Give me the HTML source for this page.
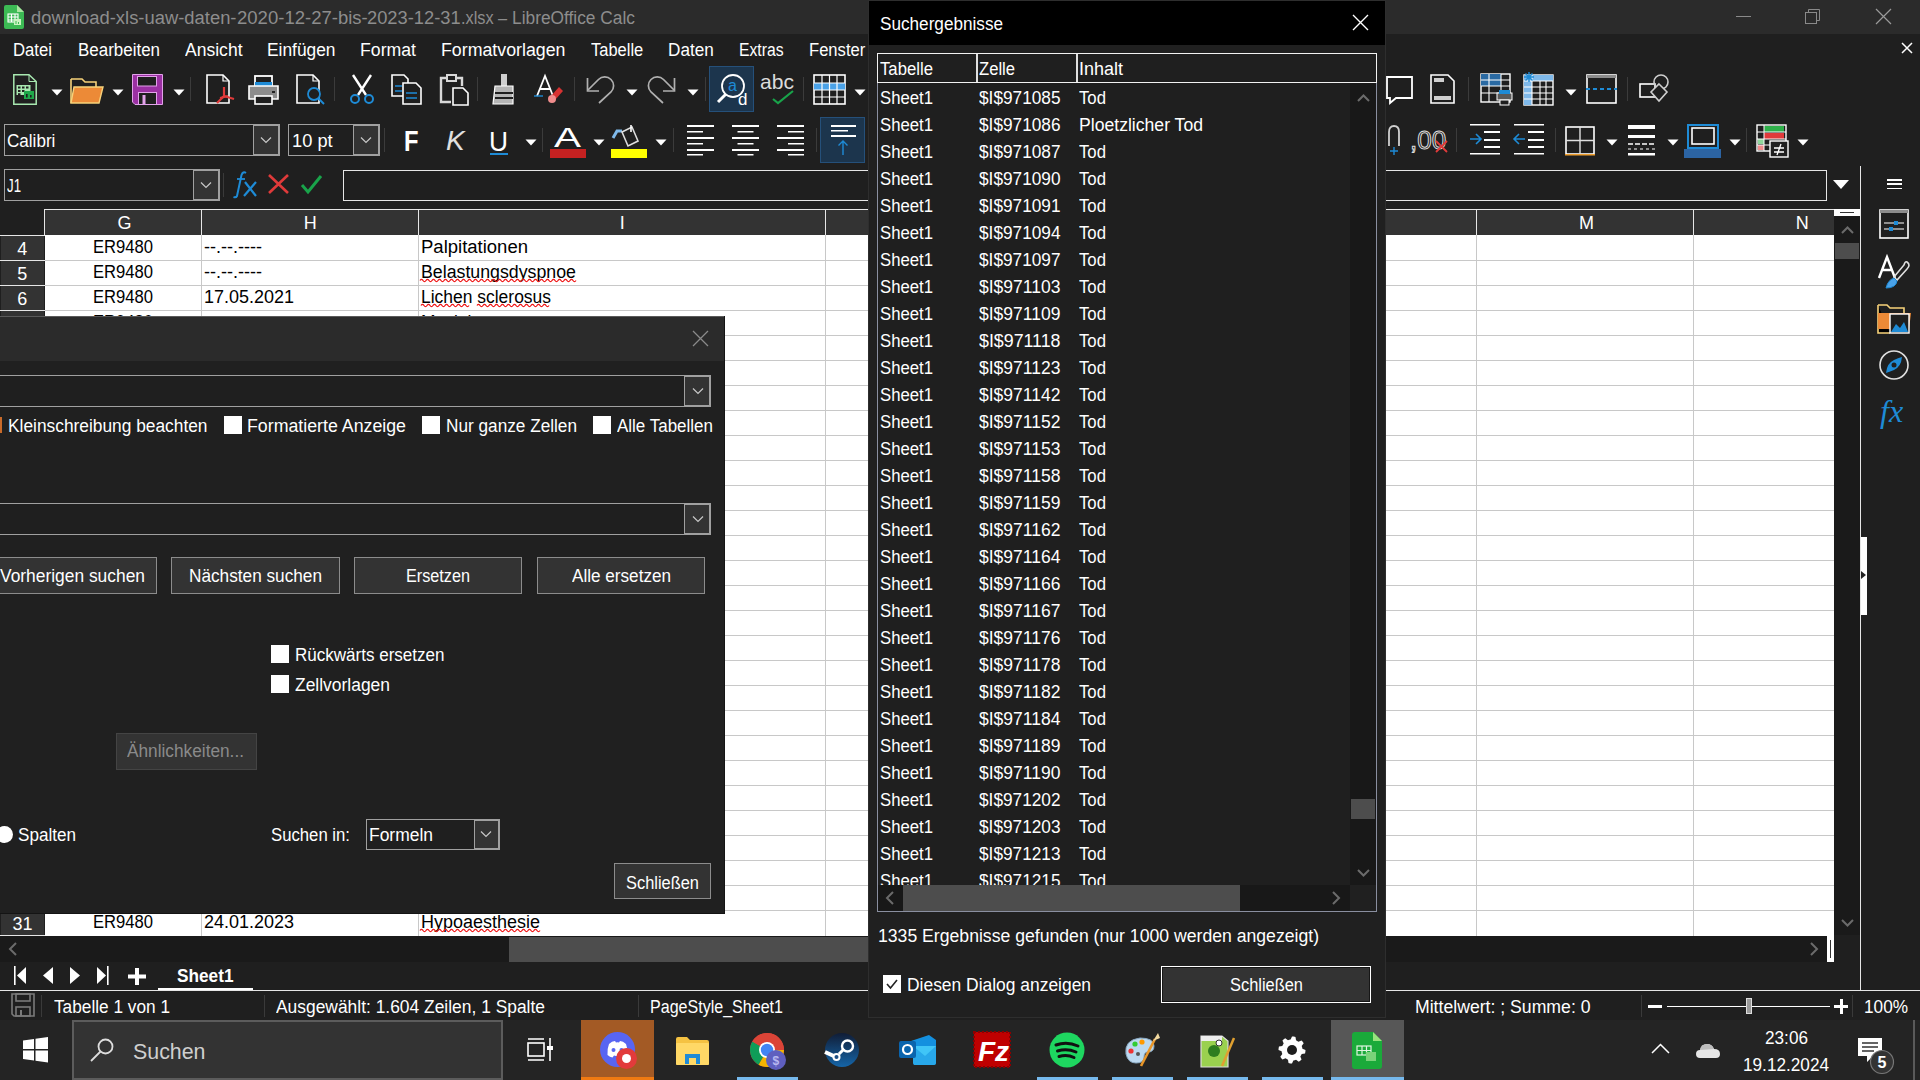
<!DOCTYPE html><html><head><meta charset="utf-8"><style>
html,body{margin:0;padding:0;width:1920px;height:1080px;overflow:hidden;background:#1f1f1f;}
.r{position:absolute;display:block;}
.t{position:absolute;white-space:nowrap;line-height:0;font-family:"Liberation Sans",sans-serif;}
svg.r{overflow:visible}
</style></head><body>
<div class="r" style="left:0px;top:0px;width:1920px;height:34px;background:#2b2b2b;"></div>
<svg class="r" style="left:4px;top:5px" width="20" height="24" viewBox="0 0 20 24"><path d="M2 0H13L20 7V22Q20 24 18 24H2Q0 24 0 22V2Q0 0 2 0Z" fill="#3cba54"/><path d="M13 0L20 7H13Z" fill="#a9e6a0"/><g fill="none" stroke="#fff" stroke-width="1.1"><rect x="4" y="9" width="10" height="8"/><path d="M4 12H14M4 15H14M7.5 9V17M11 9V17"/></g><rect x="10" y="14" width="7" height="6" fill="#c9f5c0"/><path d="M12 16V19M14.5 17V19" stroke="#3cba54"/></svg>
<div class="t" style="left:31px;top:17.75px;font-size:18px;color:#8d8d8d;transform:scaleX(1.0218);transform-origin:0 0;">download-xls-uaw-daten-</div>
<div class="t" style="left:236.5px;top:17.75px;font-size:18px;color:#8d8d8d;transform:scaleX(1.0298);transform-origin:0 0;">2020-12-27-</div>
<div class="t" style="left:337.5px;top:17.75px;font-size:18px;color:#8d8d8d;transform:scaleX(1.0240);transform-origin:0 0;">bis-</div>
<div class="t" style="left:367.2px;top:17.75px;font-size:18px;color:#8d8d8d;transform:scaleX(1.0165);transform-origin:0 0;">2023-12-31</div>
<div class="t" style="left:460.8px;top:17.75px;font-size:18px;color:#8d8d8d;transform:scaleX(0.9052);transform-origin:0 0;">.xlsx – </div>
<div class="t" style="left:511.5px;top:17.75px;font-size:18px;color:#8d8d8d;transform:scaleX(0.9630);transform-origin:0 0;">LibreOffice Calc</div>
<div class="r" style="left:1736px;top:16px;width:15px;height:1px;background:#8a8a8a;"></div>
<svg class="r" style="left:1802px;top:8px" width="20" height="18" viewBox="0 0 20 18"><rect x="3.5" y="4.5" width="11" height="11" fill="none" stroke="#8a8a8a"/><path d="M6.5 4.5V1.5H17.5V12.5H14.5" fill="none" stroke="#8a8a8a"/></svg>
<svg class="r" style="left:1874px;top:8px" width="20" height="18" viewBox="0 0 20 18"><path d="M2 1L17 16M17 1L2 16" stroke="#9a9a9a" stroke-width="1.2"/></svg>
<div class="t" style="left:13px;top:49.75px;font-size:18px;color:#ffffff;transform:scaleX(0.9281);transform-origin:0 0;">Datei</div>
<div class="t" style="left:77.5px;top:49.75px;font-size:18px;color:#ffffff;transform:scaleX(0.9418);transform-origin:0 0;">Bearbeiten</div>
<div class="t" style="left:184.5px;top:49.75px;font-size:18px;color:#ffffff;transform:scaleX(0.9741);transform-origin:0 0;">Ansicht</div>
<div class="t" style="left:266.5px;top:49.75px;font-size:18px;color:#ffffff;transform:scaleX(0.9639);transform-origin:0 0;">Einfügen</div>
<div class="t" style="left:359.5px;top:49.75px;font-size:18px;color:#ffffff;transform:scaleX(0.9823);transform-origin:0 0;">Format</div>
<div class="t" style="left:441px;top:49.75px;font-size:18px;color:#ffffff;transform:scaleX(0.9876);transform-origin:0 0;">Formatvorlagen</div>
<div class="t" style="left:590.75px;top:49.75px;font-size:18px;color:#ffffff;transform:scaleX(0.9160);transform-origin:0 0;">Tabelle</div>
<div class="t" style="left:668px;top:49.75px;font-size:18px;color:#ffffff;transform:scaleX(0.9525);transform-origin:0 0;">Daten</div>
<div class="t" style="left:738.75px;top:49.75px;font-size:18px;color:#ffffff;transform:scaleX(0.8723);transform-origin:0 0;">Extras</div>
<div class="t" style="left:808.75px;top:49.75px;font-size:18px;color:#ffffff;transform:scaleX(0.9218);transform-origin:0 0;">Fenster</div>
<svg class="r" style="left:1900px;top:41px" width="14" height="14" viewBox="0 0 14 14"><path d="M2 2L12 12M12 2L2 12" stroke="#fff" stroke-width="1.5"/></svg>
<svg class="r" style="left:13px;top:74px" width="24" height="31" viewBox="0 0 24 31"><path d="M0.8 0.8H16L23.2 7.5V30.2H0.8Z" fill="none" stroke="#a8e8b0" stroke-width="1.5"/><path d="M16 1V7.5H23" fill="none" stroke="#a8e8b0" stroke-width="1"/><rect x="3.5" y="11" width="14" height="10" fill="#a8e8b0"/><g fill="#1f1f1f"><rect x="5" y="12.5" width="2.5" height="2"/><rect x="9" y="12.5" width="2.5" height="2"/><rect x="13" y="12.5" width="2.5" height="2"/><rect x="5" y="16" width="2.5" height="2"/><rect x="9" y="16" width="2.5" height="2"/><rect x="5" y="19.2" width="2.5" height="1.8"/></g><rect x="11" y="17" width="10" height="8" fill="#1fa84a"/><rect x="13" y="20" width="1.6" height="3.5" fill="#1f1f1f"/><rect x="17" y="21" width="1.6" height="2.5" fill="#1f1f1f"/></svg>
<svg class="r" style="left:51px;top:89px" width="12" height="7" viewBox="0 0 12 7"><path d="M0.5 0.5H11.5L6 6.5Z" fill="#fff"/></svg>
<svg class="r" style="left:70px;top:75px" width="34" height="30" viewBox="0 0 34 30"><path d="M1 4H12L15 7H26V12" fill="none" stroke="#f7d27a" stroke-width="1.6"/><path d="M1 4V28" stroke="#f7d27a" stroke-width="1.6"/><path d="M4 12H33L29 28H1Z" fill="#ec8a37" stroke="#f7d27a" stroke-width="1.4"/></svg>
<svg class="r" style="left:112px;top:89px" width="12" height="7" viewBox="0 0 12 7"><path d="M0.5 0.5H11.5L6 6.5Z" fill="#fff"/></svg>
<svg class="r" style="left:132px;top:74px" width="31" height="31" viewBox="0 0 31 31"><path d="M0.5 0.5H30.5V30.5H3L0.5 28Z" fill="#9b30a3" stroke="#e2a2ea" stroke-width="1"/><rect x="5.5" y="2.5" width="19" height="9.5" fill="#1f1f1f" stroke="#e2a2ea" stroke-width="1"/><rect x="6.5" y="18.5" width="18" height="12" fill="#1f1f1f" stroke="#e2a2ea" stroke-width="1"/><rect x="10.5" y="21" width="3" height="9.5" fill="#e2a2ea"/></svg>
<svg class="r" style="left:173px;top:89px" width="12" height="7" viewBox="0 0 12 7"><path d="M0.5 0.5H11.5L6 6.5Z" fill="#fff"/></svg>
<div class="r" style="left:190px;top:77px;width:1px;height:24px;background:#3b3b3b;"></div>
<svg class="r" style="left:206px;top:74px" width="30" height="32" viewBox="0 0 30 32"><path d="M1 1H17L23 7V29H1Z" fill="none" stroke="#fff" stroke-width="1.6"/><path d="M17 1V7H23" fill="none" stroke="#fff" stroke-width="1.2"/><path d="M18 13V22L11 29M18 22L28 25" fill="none" stroke="#e03a3a" stroke-width="2.2"/><path d="M14 24L22 22" stroke="#e03a3a" stroke-width="2"/></svg>
<svg class="r" style="left:248px;top:75px" width="31" height="30" viewBox="0 0 31 30"><rect x="7" y="1" width="17" height="9" fill="none" stroke="#fff" stroke-width="1.8"/><rect x="7" y="7" width="17" height="4" fill="#1e8bd6"/><path d="M1 11H30V24H1Z" fill="#8c8c8c" stroke="#fff" stroke-width="1.6"/><rect x="7" y="21" width="17" height="8" fill="#1f1f1f" stroke="#fff" stroke-width="1.6"/><rect x="24" y="16" width="3" height="2" fill="#222"/></svg>
<svg class="r" style="left:296px;top:74px" width="30" height="32" viewBox="0 0 30 32"><path d="M1 1H17L23 7V29H1Z" fill="none" stroke="#fff" stroke-width="1.6"/><path d="M17 1V7H23" fill="none" stroke="#fff" stroke-width="1.2"/><circle cx="18" cy="20" r="6" fill="#1f1f1f" stroke="#1e8bd6" stroke-width="1.8"/><path d="M22 24L28 30" stroke="#1e8bd6" stroke-width="2"/></svg>
<div class="r" style="left:334px;top:77px;width:1px;height:24px;background:#3b3b3b;"></div>
<svg class="r" style="left:348px;top:74px" width="28" height="30" viewBox="0 0 28 30"><path d="M5 1L18 21M23 1L10 21" stroke="#fff" stroke-width="2.4"/><circle cx="7" cy="25" r="4" fill="none" stroke="#1e8bd6" stroke-width="2"/><circle cx="21" cy="25" r="4" fill="none" stroke="#1e8bd6" stroke-width="2"/></svg>
<svg class="r" style="left:391px;top:74px" width="31" height="31" viewBox="0 0 31 31"><path d="M1 1H13L17 5V22H1Z" fill="none" stroke="#fff" stroke-width="1.6"/><path d="M12 9H25L30 14V30H12Z" fill="#1f1f1f" stroke="#fff" stroke-width="1.6"/><path d="M4 12H11M4 17H11M15 19H26M15 24H26" stroke="#1e8bd6" stroke-width="1.6"/></svg>
<svg class="r" style="left:439px;top:74px" width="31" height="32" viewBox="0 0 31 32"><path d="M7 4H2V28H12M18 4H23V12" fill="none" stroke="#d8d8d8" stroke-width="2.4"/><rect x="8" y="1" width="9" height="6" fill="none" stroke="#d8d8d8" stroke-width="2"/><path d="M14 14H24L29 19V31H14Z" fill="#1f1f1f" stroke="#fff" stroke-width="1.6"/></svg>
<div class="r" style="left:477px;top:77px;width:1px;height:24px;background:#3b3b3b;"></div>
<svg class="r" style="left:492px;top:73px" width="24" height="32" viewBox="0 0 24 32"><rect x="9" y="1" width="6" height="12" fill="#cfcfcf"/><path d="M3 13H21V31H1Z" fill="#b5b5b5" stroke="#fff" stroke-width="1.2"/><path d="M3 20H21M3 25H21" stroke="#1f1f1f" stroke-width="2"/></svg>
<svg class="r" style="left:534px;top:74px" width="30" height="32" viewBox="0 0 30 32"><path d="M3 22L11 2L19 22M6 15H16" fill="none" stroke="#fff" stroke-width="1.8"/><path d="M0 22H9" stroke="#1e8bd6" stroke-width="1.4"/><path d="M17 22L25 13L29 17L21 26Z" fill="#d63232"/><circle cx="18" cy="25" r="4" fill="#f08c8c"/></svg>
<div class="r" style="left:574px;top:77px;width:1px;height:24px;background:#3b3b3b;"></div>
<svg class="r" style="left:586px;top:74px" width="29" height="30" viewBox="0 0 29 30"><path d="M1.5 4V17H13" fill="none" stroke="#b0b0b0" stroke-width="1.7"/><path d="M2 16L12.5 5.5A8.6 8.6 0 0 1 25 18L13 29" fill="none" stroke="#b0b0b0" stroke-width="1.7"/></svg>
<svg class="r" style="left:626px;top:89px" width="12" height="7" viewBox="0 0 12 7"><path d="M0.5 0.5H11.5L6 6.5Z" fill="#fff"/></svg>
<svg class="r" style="left:647px;top:74px" width="29" height="30" viewBox="0 0 29 30"><path d="M27.5 4V17H16" fill="none" stroke="#b0b0b0" stroke-width="1.7"/><path d="M27 16L16.5 5.5A8.6 8.6 0 0 0 4 18L16 29" fill="none" stroke="#b0b0b0" stroke-width="1.7"/></svg>
<svg class="r" style="left:687px;top:89px" width="12" height="7" viewBox="0 0 12 7"><path d="M0.5 0.5H11.5L6 6.5Z" fill="#fff"/></svg>
<div class="r" style="left:705px;top:77px;width:1px;height:24px;background:#3b3b3b;"></div>
<div class="r" style="left:709px;top:66px;width:45px;height:46px;background:#1c354d;box-sizing:border-box;border:1px solid #25507a;"></div>
<svg class="r" style="left:716px;top:72px" width="32" height="36" viewBox="0 0 32 36"><circle cx="17" cy="14" r="11" fill="none" stroke="#fff" stroke-width="1.8"/><path d="M10 22L2 30" stroke="#fff" stroke-width="3"/><text x="12" y="19" font-family="Liberation Sans" font-size="16" fill="#1e8bd6">a</text><text x="22" y="33" font-family="Liberation Sans" font-size="17" fill="#fff">d</text></svg>
<svg class="r" style="left:760px;top:72px" width="36" height="34" viewBox="0 0 36 34"><text x="0" y="17" font-family="Liberation Sans" font-size="21" fill="#dcdcdc" textLength="34" lengthAdjust="spacingAndGlyphs">abc</text><path d="M13 27L18 31L33 19" fill="none" stroke="#19a34a" stroke-width="2.2"/></svg>
<div class="r" style="left:803px;top:77px;width:1px;height:24px;background:#3b3b3b;"></div>
<svg class="r" style="left:813px;top:74px" width="33" height="31" viewBox="0 0 33 31"><rect x="1" y="1" width="31" height="29" fill="none" stroke="#fff" stroke-width="1.6"/><rect x="1" y="9" width="31" height="7" fill="#4aa2e8"/><path d="M1 9H32M1 16H32M1 23H32M9 1V30M16.5 1V30M24 1V30" stroke="#fff" stroke-width="1.2"/></svg>
<svg class="r" style="left:854px;top:89px" width="12" height="7" viewBox="0 0 12 7"><path d="M0.5 0.5H11.5L6 6.5Z" fill="#fff"/></svg>
<svg class="r" style="left:1386px;top:74px" width="27" height="28" viewBox="0 0 27 28"><path d="M1 3H26V24H10L4 29V24H1Z" fill="none" stroke="#fff" stroke-width="1.8"/></svg>
<svg class="r" style="left:1430px;top:74px" width="25" height="30" viewBox="0 0 25 30"><path d="M1 1H18L24 7V29H1Z" fill="none" stroke="#fff" stroke-width="1.6"/><rect x="4" y="4" width="10" height="4" fill="#cfcfcf"/><rect x="4" y="22" width="17" height="4" fill="#cfcfcf"/></svg>
<div class="r" style="left:1468px;top:77px;width:1px;height:24px;background:#3b3b3b;"></div>
<svg class="r" style="left:1480px;top:73px" width="33" height="33" viewBox="0 0 33 33"><rect x="1" y="1" width="29" height="28" fill="none" stroke="#fff" stroke-width="1.4"/><rect x="1" y="1" width="20" height="12" fill="#2a6aa3"/><path d="M1 7H30M1 13H30M1 20H30M9 1V29M21 1V29" stroke="#fff" stroke-width="1.1"/><rect x="17" y="20" width="15" height="7" fill="#5a5a5a" stroke="#fff"/><rect x="19" y="17" width="11" height="4" fill="#1e8bd6"/><rect x="20" y="27" width="9" height="5" fill="#1f1f1f" stroke="#fff"/></svg>
<svg class="r" style="left:1523px;top:72px" width="31" height="34" viewBox="0 0 31 34"><rect x="1" y="3" width="29" height="30" fill="none" stroke="#fff" stroke-width="1.4"/><rect x="1" y="3" width="29" height="6" fill="#7fb9ea"/><rect x="1" y="3" width="8" height="30" fill="#7fb9ea"/><path d="M1 9H30M1 15H30M1 21H30M1 27H30M9 3V33M17 9V33M23 9V33" stroke="#fff" stroke-width="1.1"/><path d="M6 0V10M1 5H11M2.5 1.5L9.5 8.5M9.5 1.5L2.5 8.5" stroke="#1e8bd6" stroke-width="1.4"/></svg>
<svg class="r" style="left:1565px;top:89px" width="12" height="7" viewBox="0 0 12 7"><path d="M0.5 0.5H11.5L6 6.5Z" fill="#fff"/></svg>
<svg class="r" style="left:1586px;top:74px" width="31" height="30" viewBox="0 0 31 30"><rect x="1" y="1" width="29" height="28" fill="none" stroke="#fff" stroke-width="1.6"/><rect x="1" y="1" width="29" height="3" fill="#8c8c8c"/><path d="M0 15H31" stroke="#1e8bd6" stroke-width="2" stroke-dasharray="4 3"/></svg>
<div class="r" style="left:1627px;top:77px;width:1px;height:24px;background:#3b3b3b;"></div>
<svg class="r" style="left:1639px;top:74px" width="31" height="31" viewBox="0 0 31 31"><rect x="1" y="10" width="15" height="13" fill="none" stroke="#fff" stroke-width="1.6"/><circle cx="22" cy="8" r="7" fill="none" stroke="#cfcfcf" stroke-width="1.6"/><path d="M20 10L28 18L20 27L12 18Z" fill="#1f1f1f" stroke="#cfcfcf" stroke-width="1.6"/></svg>
<div class="r" style="left:4px;top:124px;width:276px;height:32px;background:#1f1f1f;box-sizing:border-box;border:1px solid #a0a0a0;"></div>
<div class="r" style="left:253px;top:125px;width:26px;height:30px;background:#333333;box-sizing:border-box;border:1px solid #a0a0a0;"></div>
<svg class="r" style="left:260px;top:136px" width="12" height="8" viewBox="0 0 12 8"><path d="M1 1.5L6 6.5L11 1.5" fill="none" stroke="#c8c8c8" stroke-width="1.2"/></svg>
<div class="t" style="left:7.3px;top:140.75px;font-size:18px;color:#fff;transform:scaleX(0.9487);transform-origin:0 0;">Calibri</div>
<div class="r" style="left:288px;top:124px;width:92px;height:32px;background:#1f1f1f;box-sizing:border-box;border:1px solid #a0a0a0;"></div>
<div class="r" style="left:353px;top:125px;width:26px;height:30px;background:#333333;box-sizing:border-box;border:1px solid #a0a0a0;"></div>
<svg class="r" style="left:360px;top:136px" width="12" height="8" viewBox="0 0 12 8"><path d="M1 1.5L6 6.5L11 1.5" fill="none" stroke="#c8c8c8" stroke-width="1.2"/></svg>
<div class="t" style="left:292.4px;top:140.75px;font-size:18px;color:#fff;transform:scaleX(1.0141);transform-origin:0 0;">10 pt</div>
<div class="r" style="left:384px;top:128px;width:1px;height:24px;background:#3b3b3b;"></div>
<div class="t" style="left:404px;top:140.59px;font-size:30px;color:#fff;font-weight:bold;transform:scaleX(0.7912);transform-origin:0 0;">F</div>
<div class="t" style="left:446px;top:141.28px;font-size:28px;color:#e0e0e0;font-style:italic;">K</div>
<div class="t" style="left:489px;top:142.28px;font-size:28px;color:#fff;transform:scaleX(0.9396);transform-origin:0 0;">U</div>
<div class="r" style="left:490px;top:153px;width:18px;height:2px;background:#1e8bd6;"></div>
<svg class="r" style="left:525px;top:139px" width="12" height="7" viewBox="0 0 12 7"><path d="M0.5 0.5H11.5L6 6.5Z" fill="#fff"/></svg>
<div class="r" style="left:542px;top:128px;width:1px;height:24px;background:#3b3b3b;"></div>
<div class="t" style="left:554px;top:138.28px;font-size:28px;color:#fff;transform:scaleX(1.4456);transform-origin:0 0;">A</div>
<div class="r" style="left:550px;top:149px;width:36px;height:9px;background:#c42121;"></div>
<svg class="r" style="left:593px;top:139px" width="12" height="7" viewBox="0 0 12 7"><path d="M0.5 0.5H11.5L6 6.5Z" fill="#fff"/></svg>
<svg class="r" style="left:611px;top:124px" width="36" height="26" viewBox="0 0 36 26"><path d="M2 14L6 7H11" fill="none" stroke="#7fb9ea" stroke-width="3"/><path d="M11 8L21 3L27 17L17 22Z" fill="none" stroke="#ddd" stroke-width="1.6"/><path d="M20 1V8" stroke="#fff" stroke-width="1.6"/></svg>
<div class="r" style="left:611px;top:149px;width:36px;height:9px;background:#ffff00;"></div>
<svg class="r" style="left:655px;top:139px" width="12" height="7" viewBox="0 0 12 7"><path d="M0.5 0.5H11.5L6 6.5Z" fill="#fff"/></svg>
<div class="r" style="left:673px;top:128px;width:1px;height:24px;background:#3b3b3b;"></div>
<svg class="r" style="left:687px;top:125px" width="28" height="31" viewBox="0 0 28 31"><rect x="0" y="0" width="27" height="2" fill="#fff"/><rect x="0" y="6" width="16" height="1.5" fill="#fff"/><rect x="0" y="12" width="27" height="2" fill="#fff"/><rect x="0" y="18" width="16" height="1.5" fill="#fff"/><rect x="0" y="24" width="27" height="2" fill="#fff"/><rect x="0" y="29" width="16" height="1.5" fill="#fff"/></svg>
<svg class="r" style="left:732px;top:125px" width="28" height="31" viewBox="0 0 28 31"><rect x="0.0" y="0" width="27" height="2" fill="#fff"/><rect x="5.5" y="6" width="16" height="1.5" fill="#fff"/><rect x="0.0" y="12" width="27" height="2" fill="#fff"/><rect x="5.5" y="18" width="16" height="1.5" fill="#fff"/><rect x="0.0" y="24" width="27" height="2" fill="#fff"/><rect x="5.5" y="29" width="16" height="1.5" fill="#fff"/></svg>
<svg class="r" style="left:777px;top:125px" width="28" height="31" viewBox="0 0 28 31"><rect x="0" y="0" width="27" height="2" fill="#fff"/><rect x="11" y="6" width="16" height="1.5" fill="#fff"/><rect x="0" y="12" width="27" height="2" fill="#fff"/><rect x="11" y="18" width="16" height="1.5" fill="#fff"/><rect x="0" y="24" width="27" height="2" fill="#fff"/><rect x="11" y="29" width="16" height="1.5" fill="#fff"/></svg>
<div class="r" style="left:816px;top:128px;width:1px;height:24px;background:#3b3b3b;"></div>
<div class="r" style="left:820px;top:117px;width:45px;height:46px;background:#1c354d;box-sizing:border-box;border:1px solid #25507a;"></div>
<svg class="r" style="left:830px;top:124px" width="27" height="32" viewBox="0 0 27 32"><rect x="1" y="1" width="25" height="2" fill="#fff"/><rect x="1" y="6" width="17" height="1.5" fill="#fff"/><rect x="1" y="11" width="25" height="2" fill="#fff"/><path d="M13 17V31M8.5 21.5L13 17L17.5 21.5" fill="none" stroke="#1e8bd6" stroke-width="1.4"/></svg>
<svg class="r" style="left:1386px;top:124px" width="64" height="34" viewBox="0 0 64 34"><path d="M3 22V8Q3 2 8 2Q13 2 13 8V22" fill="none" stroke="#cfcfcf" stroke-width="1.8"/><path d="M8 23V31M4 27H12" stroke="#1e8bd6" stroke-width="1.4"/><text x="24" y="25" font-family="Liberation Sans" font-size="26" fill="none" stroke="#ddd" stroke-width="1">,00</text><path d="M50 17L61 28M61 17L50 28" stroke="#e03a3a" stroke-width="1.8"/></svg>
<div class="r" style="left:1456px;top:128px;width:1px;height:24px;background:#3b3b3b;"></div>
<svg class="r" style="left:1470px;top:124px" width="31" height="31" viewBox="0 0 31 31"><rect x="0" y="0" width="30" height="1.5" fill="#fff"/><rect x="0" y="29" width="30" height="1.5" fill="#fff"/><rect x="14" y="7" width="16" height="2" fill="#fff"/><rect x="14" y="15" width="16" height="2" fill="#fff"/><rect x="14" y="22" width="16" height="2" fill="#fff"/><path d="M0 15H11M6 10L11 15L6 20" fill="none" stroke="#1e8bd6" stroke-width="1.6"/></svg>
<svg class="r" style="left:1514px;top:124px" width="31" height="31" viewBox="0 0 31 31"><rect x="0" y="0" width="30" height="1.5" fill="#fff"/><rect x="0" y="29" width="30" height="1.5" fill="#fff"/><rect x="14" y="7" width="16" height="2" fill="#fff"/><rect x="14" y="15" width="16" height="2" fill="#fff"/><rect x="14" y="22" width="16" height="2" fill="#fff"/><path d="M11 15H0M5 10L0 15L5 20" fill="none" stroke="#1e8bd6" stroke-width="1.6"/></svg>
<div class="r" style="left:1555px;top:128px;width:1px;height:24px;background:#3b3b3b;"></div>
<svg class="r" style="left:1565px;top:126px" width="30" height="30" viewBox="0 0 30 30"><rect x="1" y="1" width="28" height="27" fill="none" stroke="#fff" stroke-width="1.6"/><path d="M15 1V28M1 14.5H29" stroke="#e0e0e0" stroke-width="1.4"/><rect x="0" y="28" width="30" height="1.5" fill="#f0a030"/></svg>
<svg class="r" style="left:1606px;top:139px" width="12" height="7" viewBox="0 0 12 7"><path d="M0.5 0.5H11.5L6 6.5Z" fill="#fff"/></svg>
<svg class="r" style="left:1628px;top:125px" width="28" height="31" viewBox="0 0 28 31"><rect x="0" y="0" width="27" height="4" fill="#fff"/><rect x="0" y="10" width="27" height="3" fill="#fff"/><path d="M0 19H27" stroke="#fff" stroke-width="1.4" stroke-dasharray="5 2"/><path d="M0 24H27" stroke="#fff" stroke-width="1.2" stroke-dasharray="3 3"/><rect x="0" y="28" width="27" height="2.5" fill="#fff"/></svg>
<svg class="r" style="left:1667px;top:139px" width="12" height="7" viewBox="0 0 12 7"><path d="M0.5 0.5H11.5L6 6.5Z" fill="#fff"/></svg>
<svg class="r" style="left:1684px;top:124px" width="38" height="34" viewBox="0 0 38 34"><rect x="4" y="1" width="30" height="23" fill="none" stroke="#1e8bd6" stroke-width="2"/><rect x="8" y="4" width="22" height="16" fill="none" stroke="#fff" stroke-width="1.6"/><rect x="0" y="25" width="37" height="9" fill="#2c64a3"/></svg>
<svg class="r" style="left:1729px;top:139px" width="12" height="7" viewBox="0 0 12 7"><path d="M0.5 0.5H11.5L6 6.5Z" fill="#fff"/></svg>
<div class="r" style="left:1746px;top:128px;width:1px;height:24px;background:#3b3b3b;"></div>
<svg class="r" style="left:1756px;top:124px" width="33" height="34" viewBox="0 0 33 34"><rect x="1" y="1" width="29" height="26" fill="none" stroke="#fff" stroke-width="1.4"/><rect x="8" y="2" width="20" height="6" fill="#2fb04a"/><rect x="8" y="9" width="20" height="6" fill="#e03a3a"/><rect x="2" y="15" width="6" height="5" fill="#8fd69a"/><rect x="2" y="21" width="6" height="5" fill="#f08c8c"/><path d="M1 8H30M1 15H30M1 21H30M8 1V27" stroke="#fff" stroke-width="1"/><rect x="14" y="17" width="18" height="16" fill="#1f1f1f" stroke="#fff" stroke-width="1.4"/><path d="M18 24H28M18 28H28M25 20L21 31" stroke="#fff" stroke-width="1.3"/></svg>
<svg class="r" style="left:1797px;top:139px" width="12" height="7" viewBox="0 0 12 7"><path d="M0.5 0.5H11.5L6 6.5Z" fill="#fff"/></svg>
<div class="r" style="left:4px;top:169px;width:216px;height:32px;background:#1f1f1f;box-sizing:border-box;border:1px solid #a0a0a0;"></div>
<div class="r" style="left:193px;top:170px;width:26px;height:30px;background:#333333;box-sizing:border-box;border:1px solid #a0a0a0;"></div>
<svg class="r" style="left:200px;top:181px" width="12" height="8" viewBox="0 0 12 8"><path d="M1 1.5L6 6.5L11 1.5" fill="none" stroke="#c8c8c8" stroke-width="1.2"/></svg>
<div class="t" style="left:7px;top:185.75px;font-size:18px;color:#fff;transform:scaleX(0.7364);transform-origin:0 0;">J1</div>
<div class="r" style="left:223px;top:173px;width:1px;height:24px;background:#3a3a3a;"></div>
<svg class="r" style="left:232px;top:170px" width="28" height="30" viewBox="0 0 28 30"><path d="M14 3Q11 1 9.5 5L5 26Q4 28 1.5 27" fill="none" stroke="#1e8bd6" stroke-width="2"/><path d="M5 9H13" stroke="#1e8bd6" stroke-width="1.8"/><path d="M13 12L24 26M24 12L12 26" stroke="#1e8bd6" stroke-width="2.2"/></svg>
<svg class="r" style="left:267px;top:173px" width="23" height="22" viewBox="0 0 23 22"><path d="M2 2L21 20M21 2L2 20" stroke="#e03a3a" stroke-width="2.6"/></svg>
<svg class="r" style="left:300px;top:173px" width="23" height="21" viewBox="0 0 23 21"><path d="M2 12L8 19L21 3" fill="none" stroke="#19a34a" stroke-width="3"/></svg>
<div class="r" style="left:343px;top:170px;width:1484px;height:31px;background:#1f1f1f;box-sizing:border-box;border:1px solid #e6e6e6;"></div>
<svg class="r" style="left:1833px;top:180px" width="17" height="10" viewBox="0 0 17 10"><path d="M0 0H16L8 9Z" fill="#fff"/></svg>
<div class="r" style="left:1860px;top:166px;width:1px;height:824px;background:#e6e6e6;"></div>
<div class="r" style="left:44px;top:209px;width:1790px;height:1px;background:#e6e6e6;"></div>
<div class="r" style="left:45px;top:210px;width:1789px;height:25px;background:#333333;"></div>
<div class="r" style="left:44px;top:210px;width:1px;height:25px;background:#e6e6e6;"></div>
<div class="r" style="left:0px;top:235px;width:45px;height:1px;background:#e6e6e6;"></div>
<div class="r" style="left:45px;top:235px;width:1789px;height:701px;background:#ffffff;"></div>
<div class="r" style="left:45px;top:260px;width:1789px;height:1px;background:#c8c8c8;"></div>
<div class="r" style="left:45px;top:285px;width:1789px;height:1px;background:#c8c8c8;"></div>
<div class="r" style="left:45px;top:310px;width:1789px;height:1px;background:#c8c8c8;"></div>
<div class="r" style="left:45px;top:335px;width:1789px;height:1px;background:#c8c8c8;"></div>
<div class="r" style="left:45px;top:360px;width:1789px;height:1px;background:#c8c8c8;"></div>
<div class="r" style="left:45px;top:385px;width:1789px;height:1px;background:#c8c8c8;"></div>
<div class="r" style="left:45px;top:410px;width:1789px;height:1px;background:#c8c8c8;"></div>
<div class="r" style="left:45px;top:435px;width:1789px;height:1px;background:#c8c8c8;"></div>
<div class="r" style="left:45px;top:460px;width:1789px;height:1px;background:#c8c8c8;"></div>
<div class="r" style="left:45px;top:485px;width:1789px;height:1px;background:#c8c8c8;"></div>
<div class="r" style="left:45px;top:510px;width:1789px;height:1px;background:#c8c8c8;"></div>
<div class="r" style="left:45px;top:535px;width:1789px;height:1px;background:#c8c8c8;"></div>
<div class="r" style="left:45px;top:560px;width:1789px;height:1px;background:#c8c8c8;"></div>
<div class="r" style="left:45px;top:585px;width:1789px;height:1px;background:#c8c8c8;"></div>
<div class="r" style="left:45px;top:610px;width:1789px;height:1px;background:#c8c8c8;"></div>
<div class="r" style="left:45px;top:635px;width:1789px;height:1px;background:#c8c8c8;"></div>
<div class="r" style="left:45px;top:660px;width:1789px;height:1px;background:#c8c8c8;"></div>
<div class="r" style="left:45px;top:685px;width:1789px;height:1px;background:#c8c8c8;"></div>
<div class="r" style="left:45px;top:710px;width:1789px;height:1px;background:#c8c8c8;"></div>
<div class="r" style="left:45px;top:735px;width:1789px;height:1px;background:#c8c8c8;"></div>
<div class="r" style="left:45px;top:760px;width:1789px;height:1px;background:#c8c8c8;"></div>
<div class="r" style="left:45px;top:785px;width:1789px;height:1px;background:#c8c8c8;"></div>
<div class="r" style="left:45px;top:810px;width:1789px;height:1px;background:#c8c8c8;"></div>
<div class="r" style="left:45px;top:835px;width:1789px;height:1px;background:#c8c8c8;"></div>
<div class="r" style="left:45px;top:860px;width:1789px;height:1px;background:#c8c8c8;"></div>
<div class="r" style="left:45px;top:885px;width:1789px;height:1px;background:#c8c8c8;"></div>
<div class="r" style="left:45px;top:910px;width:1789px;height:1px;background:#c8c8c8;"></div>
<div class="r" style="left:201px;top:210px;width:1px;height:25px;background:#e6e6e6;"></div>
<div class="r" style="left:201px;top:235px;width:1px;height:701px;background:#c8c8c8;"></div>
<div class="r" style="left:418px;top:210px;width:1px;height:25px;background:#e6e6e6;"></div>
<div class="r" style="left:418px;top:235px;width:1px;height:701px;background:#c8c8c8;"></div>
<div class="r" style="left:825px;top:210px;width:1px;height:25px;background:#e6e6e6;"></div>
<div class="r" style="left:825px;top:235px;width:1px;height:701px;background:#c8c8c8;"></div>
<div class="r" style="left:1476px;top:210px;width:1px;height:25px;background:#e6e6e6;"></div>
<div class="r" style="left:1476px;top:235px;width:1px;height:701px;background:#c8c8c8;"></div>
<div class="r" style="left:1693px;top:210px;width:1px;height:25px;background:#e6e6e6;"></div>
<div class="r" style="left:1693px;top:235px;width:1px;height:701px;background:#c8c8c8;"></div>
<div class="r" style="left:1px;top:236px;width:43px;height:24px;background:#333333;"></div>
<div class="r" style="left:0px;top:260px;width:45px;height:1px;background:#e6e6e6;"></div>
<div class="r" style="left:1px;top:261px;width:43px;height:24px;background:#333333;"></div>
<div class="r" style="left:0px;top:285px;width:45px;height:1px;background:#e6e6e6;"></div>
<div class="r" style="left:1px;top:286px;width:43px;height:24px;background:#333333;"></div>
<div class="r" style="left:0px;top:310px;width:45px;height:1px;background:#e6e6e6;"></div>
<div class="r" style="left:1px;top:311px;width:43px;height:24px;background:#333333;"></div>
<div class="r" style="left:0px;top:335px;width:45px;height:1px;background:#e6e6e6;"></div>
<div class="r" style="left:1px;top:336px;width:43px;height:24px;background:#333333;"></div>
<div class="r" style="left:0px;top:360px;width:45px;height:1px;background:#e6e6e6;"></div>
<div class="r" style="left:1px;top:361px;width:43px;height:24px;background:#333333;"></div>
<div class="r" style="left:0px;top:385px;width:45px;height:1px;background:#e6e6e6;"></div>
<div class="r" style="left:1px;top:386px;width:43px;height:24px;background:#333333;"></div>
<div class="r" style="left:0px;top:410px;width:45px;height:1px;background:#e6e6e6;"></div>
<div class="r" style="left:1px;top:411px;width:43px;height:24px;background:#333333;"></div>
<div class="r" style="left:0px;top:435px;width:45px;height:1px;background:#e6e6e6;"></div>
<div class="r" style="left:1px;top:436px;width:43px;height:24px;background:#333333;"></div>
<div class="r" style="left:0px;top:460px;width:45px;height:1px;background:#e6e6e6;"></div>
<div class="r" style="left:1px;top:461px;width:43px;height:24px;background:#333333;"></div>
<div class="r" style="left:0px;top:485px;width:45px;height:1px;background:#e6e6e6;"></div>
<div class="r" style="left:1px;top:486px;width:43px;height:24px;background:#333333;"></div>
<div class="r" style="left:0px;top:510px;width:45px;height:1px;background:#e6e6e6;"></div>
<div class="r" style="left:1px;top:511px;width:43px;height:24px;background:#333333;"></div>
<div class="r" style="left:0px;top:535px;width:45px;height:1px;background:#e6e6e6;"></div>
<div class="r" style="left:1px;top:536px;width:43px;height:24px;background:#333333;"></div>
<div class="r" style="left:0px;top:560px;width:45px;height:1px;background:#e6e6e6;"></div>
<div class="r" style="left:1px;top:561px;width:43px;height:24px;background:#333333;"></div>
<div class="r" style="left:0px;top:585px;width:45px;height:1px;background:#e6e6e6;"></div>
<div class="r" style="left:1px;top:586px;width:43px;height:24px;background:#333333;"></div>
<div class="r" style="left:0px;top:610px;width:45px;height:1px;background:#e6e6e6;"></div>
<div class="r" style="left:1px;top:611px;width:43px;height:24px;background:#333333;"></div>
<div class="r" style="left:0px;top:635px;width:45px;height:1px;background:#e6e6e6;"></div>
<div class="r" style="left:1px;top:636px;width:43px;height:24px;background:#333333;"></div>
<div class="r" style="left:0px;top:660px;width:45px;height:1px;background:#e6e6e6;"></div>
<div class="r" style="left:1px;top:661px;width:43px;height:24px;background:#333333;"></div>
<div class="r" style="left:0px;top:685px;width:45px;height:1px;background:#e6e6e6;"></div>
<div class="r" style="left:1px;top:686px;width:43px;height:24px;background:#333333;"></div>
<div class="r" style="left:0px;top:710px;width:45px;height:1px;background:#e6e6e6;"></div>
<div class="r" style="left:1px;top:711px;width:43px;height:24px;background:#333333;"></div>
<div class="r" style="left:0px;top:735px;width:45px;height:1px;background:#e6e6e6;"></div>
<div class="r" style="left:1px;top:736px;width:43px;height:24px;background:#333333;"></div>
<div class="r" style="left:0px;top:760px;width:45px;height:1px;background:#e6e6e6;"></div>
<div class="r" style="left:1px;top:761px;width:43px;height:24px;background:#333333;"></div>
<div class="r" style="left:0px;top:785px;width:45px;height:1px;background:#e6e6e6;"></div>
<div class="r" style="left:1px;top:786px;width:43px;height:24px;background:#333333;"></div>
<div class="r" style="left:0px;top:810px;width:45px;height:1px;background:#e6e6e6;"></div>
<div class="r" style="left:1px;top:811px;width:43px;height:24px;background:#333333;"></div>
<div class="r" style="left:0px;top:835px;width:45px;height:1px;background:#e6e6e6;"></div>
<div class="r" style="left:1px;top:836px;width:43px;height:24px;background:#333333;"></div>
<div class="r" style="left:0px;top:860px;width:45px;height:1px;background:#e6e6e6;"></div>
<div class="r" style="left:1px;top:861px;width:43px;height:24px;background:#333333;"></div>
<div class="r" style="left:0px;top:885px;width:45px;height:1px;background:#e6e6e6;"></div>
<div class="r" style="left:1px;top:886px;width:43px;height:24px;background:#333333;"></div>
<div class="r" style="left:0px;top:910px;width:45px;height:1px;background:#e6e6e6;"></div>
<div class="r" style="left:1px;top:911px;width:43px;height:24px;background:#333333;"></div>
<div class="r" style="left:0px;top:935px;width:45px;height:1px;background:#e6e6e6;"></div>
<div class="t" style="left:117.38859375px;top:222.75px;font-size:18px;color:#fff;">G</div>
<div class="t" style="left:303.86140625px;top:222.75px;font-size:18px;color:#fff;">H</div>
<div class="t" style="left:619.63859375px;top:222.75px;font-size:18px;color:#fff;">I</div>
<div class="t" style="left:1578.9191015625px;top:222.75px;font-size:18px;color:#fff;">M</div>
<div class="t" style="left:1795.86140625px;top:222.75px;font-size:18px;color:#fff;">N</div>
<div class="t" style="left:17.2725390625px;top:248.75px;font-size:18px;color:#fff;">4</div>
<div class="t" style="left:17.2725390625px;top:273.75px;font-size:18px;color:#fff;">5</div>
<div class="t" style="left:17.2725390625px;top:298.75px;font-size:18px;color:#fff;">6</div>
<div class="t" style="left:17.2725390625px;top:323.75px;font-size:18px;color:#fff;">7</div>
<div class="t" style="left:12.545078125px;top:923.75px;font-size:18px;color:#fff;">31</div>
<div class="t" style="left:92.5px;top:246.75px;font-size:18px;color:#000;transform:scaleX(0.9224);transform-origin:0 0;">ER9480</div>
<div class="t" style="left:203.5px;top:246.75px;font-size:18px;color:#000;transform:scaleX(1.0007);transform-origin:0 0;">--.--.----</div>
<div class="t" style="left:421px;top:246.75px;font-size:18px;color:#000;transform:scaleX(1.0280);transform-origin:0 0;">Palpitationen</div>
<div class="t" style="left:92.5px;top:271.75px;font-size:18px;color:#000;transform:scaleX(0.9224);transform-origin:0 0;">ER9480</div>
<div class="t" style="left:203.5px;top:271.75px;font-size:18px;color:#000;transform:scaleX(1.0007);transform-origin:0 0;">--.--.----</div>
<div class="t" style="left:421px;top:271.75px;font-size:18px;color:#000;transform:scaleX(0.9865);transform-origin:0 0;">Belastungsdyspnoe</div>
<div class="t" style="left:92.5px;top:296.75px;font-size:18px;color:#000;transform:scaleX(0.9224);transform-origin:0 0;">ER9480</div>
<div class="t" style="left:203.5px;top:296.75px;font-size:18px;color:#000;transform:scaleX(0.9990);transform-origin:0 0;">17.05.2021</div>
<div class="t" style="left:421px;top:296.75px;font-size:18px;color:#000;transform:scaleX(0.9696);transform-origin:0 0;">Lichen sclerosus</div>
<div class="t" style="left:92.5px;top:321.75px;font-size:18px;color:#000;transform:scaleX(0.9224);transform-origin:0 0;">ER9480</div>
<div class="t" style="left:421px;top:321.75px;font-size:18px;color:#000;transform:scaleX(0.9673);transform-origin:0 0;">Myalgie</div>
<div class="t" style="left:92.5px;top:921.75px;font-size:18px;color:#000;transform:scaleX(0.9224);transform-origin:0 0;">ER9480</div>
<div class="t" style="left:203.5px;top:921.75px;font-size:18px;color:#000;transform:scaleX(0.9990);transform-origin:0 0;">24.01.2023</div>
<div class="t" style="left:421px;top:921.75px;font-size:18px;color:#000;transform:scaleX(0.9994);transform-origin:0 0;">Hypoaesthesie</div>
<svg class="r" style="left:420px;top:279px" width="157" height="4" viewBox="0 0 157 4"><path d="M0 1.5 C1 0 2 0 3 1.5 C4 3 5 3 6 1.5 C7 0 8 0 9 1.5 C10 3 11 3 12 1.5 C13 0 14 0 15 1.5 C16 3 17 3 18 1.5 C19 0 20 0 21 1.5 C22 3 23 3 24 1.5 C25 0 26 0 27 1.5 C28 3 29 3 30 1.5 C31 0 32 0 33 1.5 C34 3 35 3 36 1.5 C37 0 38 0 39 1.5 C40 3 41 3 42 1.5 C43 0 44 0 45 1.5 C46 3 47 3 48 1.5 C49 0 50 0 51 1.5 C52 3 53 3 54 1.5 C55 0 56 0 57 1.5 C58 3 59 3 60 1.5 C61 0 62 0 63 1.5 C64 3 65 3 66 1.5 C67 0 68 0 69 1.5 C70 3 71 3 72 1.5 C73 0 74 0 75 1.5 C76 3 77 3 78 1.5 C79 0 80 0 81 1.5 C82 3 83 3 84 1.5 C85 0 86 0 87 1.5 C88 3 89 3 90 1.5 C91 0 92 0 93 1.5 C94 3 95 3 96 1.5 C97 0 98 0 99 1.5 C100 3 101 3 102 1.5 C103 0 104 0 105 1.5 C106 3 107 3 108 1.5 C109 0 110 0 111 1.5 C112 3 113 3 114 1.5 C115 0 116 0 117 1.5 C118 3 119 3 120 1.5 C121 0 122 0 123 1.5 C124 3 125 3 126 1.5 C127 0 128 0 129 1.5 C130 3 131 3 132 1.5 C133 0 134 0 135 1.5 C136 3 137 3 138 1.5 C139 0 140 0 141 1.5 C142 3 143 3 144 1.5 C145 0 146 0 147 1.5 C148 3 149 3 150 1.5 C151 0 152 0 153 1.5 C154 3 155 3 156 1.5" fill="none" stroke="#f01818" stroke-width="1.3"/></svg>
<svg class="r" style="left:421px;top:304px" width="51" height="4" viewBox="0 0 51 4"><path d="M0 1.5 C1 0 2 0 3 1.5 C4 3 5 3 6 1.5 C7 0 8 0 9 1.5 C10 3 11 3 12 1.5 C13 0 14 0 15 1.5 C16 3 17 3 18 1.5 C19 0 20 0 21 1.5 C22 3 23 3 24 1.5 C25 0 26 0 27 1.5 C28 3 29 3 30 1.5 C31 0 32 0 33 1.5 C34 3 35 3 36 1.5 C37 0 38 0 39 1.5 C40 3 41 3 42 1.5 C43 0 44 0 45 1.5 C46 3 47 3 48 1.5" fill="none" stroke="#f01818" stroke-width="1.3"/></svg>
<svg class="r" style="left:477px;top:304px" width="74" height="4" viewBox="0 0 74 4"><path d="M0 1.5 C1 0 2 0 3 1.5 C4 3 5 3 6 1.5 C7 0 8 0 9 1.5 C10 3 11 3 12 1.5 C13 0 14 0 15 1.5 C16 3 17 3 18 1.5 C19 0 20 0 21 1.5 C22 3 23 3 24 1.5 C25 0 26 0 27 1.5 C28 3 29 3 30 1.5 C31 0 32 0 33 1.5 C34 3 35 3 36 1.5 C37 0 38 0 39 1.5 C40 3 41 3 42 1.5 C43 0 44 0 45 1.5 C46 3 47 3 48 1.5 C49 0 50 0 51 1.5 C52 3 53 3 54 1.5 C55 0 56 0 57 1.5 C58 3 59 3 60 1.5 C61 0 62 0 63 1.5 C64 3 65 3 66 1.5 C67 0 68 0 69 1.5 C70 3 71 3 72 1.5" fill="none" stroke="#f01818" stroke-width="1.3"/></svg>
<svg class="r" style="left:420px;top:929px" width="120" height="4" viewBox="0 0 120 4"><path d="M0 1.5 C1 0 2 0 3 1.5 C4 3 5 3 6 1.5 C7 0 8 0 9 1.5 C10 3 11 3 12 1.5 C13 0 14 0 15 1.5 C16 3 17 3 18 1.5 C19 0 20 0 21 1.5 C22 3 23 3 24 1.5 C25 0 26 0 27 1.5 C28 3 29 3 30 1.5 C31 0 32 0 33 1.5 C34 3 35 3 36 1.5 C37 0 38 0 39 1.5 C40 3 41 3 42 1.5 C43 0 44 0 45 1.5 C46 3 47 3 48 1.5 C49 0 50 0 51 1.5 C52 3 53 3 54 1.5 C55 0 56 0 57 1.5 C58 3 59 3 60 1.5 C61 0 62 0 63 1.5 C64 3 65 3 66 1.5 C67 0 68 0 69 1.5 C70 3 71 3 72 1.5 C73 0 74 0 75 1.5 C76 3 77 3 78 1.5 C79 0 80 0 81 1.5 C82 3 83 3 84 1.5 C85 0 86 0 87 1.5 C88 3 89 3 90 1.5 C91 0 92 0 93 1.5 C94 3 95 3 96 1.5 C97 0 98 0 99 1.5 C100 3 101 3 102 1.5 C103 0 104 0 105 1.5 C106 3 107 3 108 1.5 C109 0 110 0 111 1.5 C112 3 113 3 114 1.5 C115 0 116 0 117 1.5 C118 3 119 3 120 1.5" fill="none" stroke="#f01818" stroke-width="1.3"/></svg>
<div class="r" style="left:1834px;top:210px;width:26px;height:725px;background:#1a1a1a;"></div>
<div class="r" style="left:1834px;top:209px;width:26px;height:7px;background:#ffffff;"></div>
<div class="r" style="left:1840px;top:212px;width:14px;height:1px;background:#333;"></div>
<svg class="r" style="left:1841px;top:225px" width="13" height="10" viewBox="0 0 13 10"><path d="M1 8L6.5 2.5L12 8" fill="none" stroke="#6b6b6b" stroke-width="2"/></svg>
<div class="r" style="left:1835px;top:243px;width:24px;height:16px;background:#4d4d4d;"></div>
<svg class="r" style="left:1841px;top:918px" width="13" height="10" viewBox="0 0 13 10"><path d="M1 2L6.5 7.5L12 2" fill="none" stroke="#6b6b6b" stroke-width="2"/></svg>
<div class="r" style="left:0px;top:936px;width:1834px;height:26px;background:#1a1a1a;"></div>
<div class="r" style="left:509px;top:937px;width:800px;height:25px;background:#4d4d4d;"></div>
<svg class="r" style="left:7px;top:942px" width="12" height="14" viewBox="0 0 12 14"><path d="M9 1L3 7L9 13" fill="none" stroke="#6b6b6b" stroke-width="2"/></svg>
<svg class="r" style="left:1808px;top:942px" width="12" height="14" viewBox="0 0 12 14"><path d="M3 1L9 7L3 13" fill="none" stroke="#6b6b6b" stroke-width="2"/></svg>
<div class="r" style="left:1827px;top:936px;width:7px;height:26px;background:#fff;"></div>
<div class="r" style="left:1830px;top:940px;width:1px;height:18px;background:#333;"></div>
<div class="r" style="left:0px;top:962px;width:1860px;height:28px;background:#1f1f1f;"></div>
<svg class="r" style="left:14px;top:966px" width="13" height="19" viewBox="0 0 13 19"><rect x="0" y="0" width="1.6" height="19" fill="#fff"/><path d="M12 1V18L3 9.5Z" fill="#fff"/></svg>
<svg class="r" style="left:42px;top:966px" width="12" height="19" viewBox="0 0 12 19"><path d="M11 1V18L1 9.5Z" fill="#fff"/></svg>
<svg class="r" style="left:69px;top:966px" width="12" height="19" viewBox="0 0 12 19"><path d="M1 1V18L11 9.5Z" fill="#fff"/></svg>
<svg class="r" style="left:96px;top:966px" width="13" height="19" viewBox="0 0 13 19"><rect x="11" y="0" width="1.6" height="19" fill="#fff"/><path d="M1 1V18L10 9.5Z" fill="#fff"/></svg>
<svg class="r" style="left:127px;top:967px" width="20" height="19" viewBox="0 0 20 19"><path d="M10 1V18M1 9.5H19" stroke="#fff" stroke-width="4"/></svg>
<div class="t" style="left:176.5px;top:975.75px;font-size:18px;color:#fff;font-weight:bold;transform:scaleX(0.9571);transform-origin:0 0;">Sheet1</div>
<div class="r" style="left:158px;top:988px;width:95px;height:3px;background:#ffffff;"></div>
<div class="r" style="left:0px;top:990px;width:1920px;height:1px;background:#e6e6e6;"></div>
<div class="r" style="left:0px;top:991px;width:1920px;height:29px;background:#1f1f1f;"></div>
<svg class="r" style="left:11px;top:993px" width="24" height="24" viewBox="0 0 24 24"><path d="M1 1H23V23H3L1 21Z" fill="none" stroke="#7a7a7a" stroke-width="1.6"/><rect x="5" y="1" width="14" height="7" fill="none" stroke="#7a7a7a" stroke-width="1.6"/><rect x="5" y="14" width="14" height="9" fill="none" stroke="#7a7a7a" stroke-width="1.6"/><rect x="9" y="17" width="2" height="6" fill="#7a7a7a"/></svg>
<div class="r" style="left:41px;top:995px;width:1px;height:22px;background:#3a3a3a;"></div>
<div class="r" style="left:264px;top:995px;width:1px;height:22px;background:#3a3a3a;"></div>
<div class="r" style="left:638px;top:995px;width:1px;height:22px;background:#3a3a3a;"></div>
<div class="r" style="left:1641px;top:995px;width:1px;height:22px;background:#3a3a3a;"></div>
<div class="r" style="left:1852px;top:995px;width:1px;height:22px;background:#3a3a3a;"></div>
<div class="t" style="left:53.5px;top:1006.75px;font-size:18px;color:#fff;transform:scaleX(0.9580);transform-origin:0 0;">Tabelle 1 von 1</div>
<div class="t" style="left:276.3px;top:1006.75px;font-size:18px;color:#fff;transform:scaleX(0.9670);transform-origin:0 0;">Ausgewählt: 1.604 Zeilen, 1 Spalte</div>
<div class="t" style="left:649.5px;top:1006.75px;font-size:18px;color:#fff;transform:scaleX(0.8919);transform-origin:0 0;">PageStyle_Sheet1</div>
<div class="t" style="left:1415px;top:1006.75px;font-size:18px;color:#fff;transform:scaleX(0.9802);transform-origin:0 0;">Mittelwert: ; Summe: 0</div>
<div class="r" style="left:1648px;top:1005px;width:14px;height:3px;background:#fff;"></div>
<div class="r" style="left:1667px;top:1006px;width:163px;height:1px;background:#fff;"></div>
<div class="r" style="left:1746px;top:998px;width:6px;height:16px;background:#9a9a9a;box-sizing:border-box;border:1px solid #ddd;"></div>
<div class="r" style="left:1834px;top:1005px;width:14px;height:3px;background:#fff;"></div>
<div class="r" style="left:1839.5px;top:999px;width:3px;height:15px;background:#fff;"></div>
<div class="t" style="left:1864px;top:1006.75px;font-size:18px;color:#fff;transform:scaleX(0.9557);transform-origin:0 0;">100%</div>
<div class="r" style="left:1861px;top:166px;width:59px;height:824px;background:#1f1f1f;"></div>
<div class="r" style="left:1887px;top:179px;width:15px;height:1.5px;background:#fff;"></div>
<div class="r" style="left:1887px;top:183px;width:15px;height:2px;background:#fff;"></div>
<div class="r" style="left:1887px;top:187.5px;width:15px;height:1.5px;background:#fff;"></div>
<svg class="r" style="left:1879px;top:209px" width="30" height="30" viewBox="0 0 30 30"><rect x="1" y="1" width="28" height="28" fill="none" stroke="#fff" stroke-width="1.6"/><rect x="1" y="1" width="28" height="3" fill="#8c8c8c"/><path d="M5 14H25M5 20H25" stroke="#fff" stroke-width="1.2"/><rect x="15" y="12" width="4" height="4" fill="#1e8bd6"/><rect x="10" y="18" width="4" height="4" fill="#1e8bd6"/></svg>
<svg class="r" style="left:1877px;top:255px" width="34" height="36" viewBox="0 0 34 36"><path d="M2 23L10 2L18 23M5.5 15H14.5" fill="none" stroke="#fff" stroke-width="2.4"/><path d="M30 7Q34 10 30 14L20 25L17 22L27 10Q28 6 30 7Z" fill="none" stroke="#e0e0e0" stroke-width="1.6"/><path d="M9 33Q11 25 17 23L20 26Q19 33 9 33Z" fill="#4aa2e8" stroke="#1e8bd6" stroke-width="1"/></svg>
<svg class="r" style="left:1877px;top:303px" width="35" height="31" viewBox="0 0 35 31"><path d="M1 2H10L13 5H27V10" fill="none" stroke="#f7d27a" stroke-width="1.6"/><path d="M1 2V30H13" stroke="#f7d27a" stroke-width="1.6"/><path d="M1 10H34L32 26H1Z" fill="#ec8a37"/><rect x="13" y="11" width="19" height="19" fill="#1f1f1f" stroke="#fff" stroke-width="1.4"/><path d="M14 29L19 21L23 25L27 19L31 29Z" fill="#1e8bd6"/></svg>
<svg class="r" style="left:1879px;top:350px" width="30" height="30" viewBox="0 0 30 30"><circle cx="15" cy="15" r="14" fill="none" stroke="#e0e0e0" stroke-width="1.6"/><path d="M23 7Q22 17 15 20Q10 22 7 23Q8 13 15 10Q19 8 23 7Z" fill="#1e8bd6"/><circle cx="15" cy="15" r="2.5" fill="#1f1f1f"/></svg>
<svg class="r" style="left:1880px;top:396px" width="32" height="32" viewBox="0 0 32 32"><text x="0" y="26" font-family="Liberation Serif" font-style="italic" font-size="32" fill="#1e8bd6">fx</text></svg>
<div class="r" style="left:1861px;top:537px;width:6px;height:78px;background:#fff;"></div>
<svg class="r" style="left:1861px;top:570px" width="6" height="10" viewBox="0 0 6 10"><path d="M0 1L5 5L0 9Z" fill="#222"/></svg>
<div class="r" style="left:0px;top:316px;width:725px;height:598px;background:#202020;"></div>
<div class="r" style="left:0px;top:316px;width:725px;height:1px;background:#5a5a5a;"></div>
<div class="r" style="left:724px;top:316px;width:1px;height:598px;background:#141414;"></div>
<div class="r" style="left:0px;top:913px;width:725px;height:1px;background:#141414;"></div>
<div class="r" style="left:0px;top:317px;width:724px;height:44px;background:#2b2b2b;"></div>
<svg class="r" style="left:692px;top:330px" width="18" height="18" viewBox="0 0 18 18"><path d="M1 1L16 16M16 1L1 16" stroke="#8a8a8a" stroke-width="1.3"/></svg>
<div class="r" style="left:-5px;top:375px;width:716px;height:32px;background:#1f1f1f;box-sizing:border-box;border:1px solid #a0a0a0;"></div>
<div class="r" style="left:684px;top:376px;width:26px;height:30px;background:#333333;box-sizing:border-box;border:1px solid #a0a0a0;"></div>
<svg class="r" style="left:692px;top:387px" width="12" height="8" viewBox="0 0 12 8"><path d="M1 1.5L6 6.5L11 1.5" fill="none" stroke="#c8c8c8" stroke-width="1.2"/></svg>
<div class="r" style="left:0px;top:417px;width:2px;height:16px;background:#c86a2a;"></div>
<div class="t" style="left:8px;top:425.75px;font-size:18px;color:#fff;transform:scaleX(0.9630);transform-origin:0 0;">Kleinschreibung beachten</div>
<div class="r" style="left:224px;top:416px;width:18px;height:18px;background:#ffffff;"></div>
<div class="t" style="left:247px;top:425.75px;font-size:18px;color:#fff;transform:scaleX(0.9871);transform-origin:0 0;">Formatierte Anzeige</div>
<div class="r" style="left:422px;top:416px;width:18px;height:18px;background:#ffffff;"></div>
<div class="t" style="left:445.5px;top:425.75px;font-size:18px;color:#fff;transform:scaleX(0.9557);transform-origin:0 0;">Nur ganze Zellen</div>
<div class="r" style="left:593px;top:416px;width:18px;height:18px;background:#ffffff;"></div>
<div class="t" style="left:616.5px;top:425.75px;font-size:18px;color:#fff;transform:scaleX(0.9435);transform-origin:0 0;">Alle Tabellen</div>
<div class="r" style="left:-5px;top:503px;width:716px;height:32px;background:#1f1f1f;box-sizing:border-box;border:1px solid #a0a0a0;"></div>
<div class="r" style="left:684px;top:504px;width:26px;height:30px;background:#333333;box-sizing:border-box;border:1px solid #a0a0a0;"></div>
<svg class="r" style="left:692px;top:515px" width="12" height="8" viewBox="0 0 12 8"><path d="M1 1.5L6 6.5L11 1.5" fill="none" stroke="#c8c8c8" stroke-width="1.2"/></svg>
<div class="r" style="left:-5px;top:557px;width:162px;height:37px;background:#333333;box-sizing:border-box;border:1px solid #8c8c8c;"></div>
<div class="t" style="left:0px;top:575.75px;font-size:18px;color:#fff;transform:scaleX(0.9659);transform-origin:0 0;">Vorherigen suchen</div>
<div class="r" style="left:171px;top:557px;width:169px;height:37px;background:#333333;box-sizing:border-box;border:1px solid #8c8c8c;"></div>
<div class="t" style="left:189px;top:575.75px;font-size:18px;color:#fff;transform:scaleX(0.9562);transform-origin:0 0;">Nächsten suchen</div>
<div class="r" style="left:354px;top:557px;width:168px;height:37px;background:#333333;box-sizing:border-box;border:1px solid #8c8c8c;"></div>
<div class="t" style="left:406.4px;top:575.75px;font-size:18px;color:#fff;transform:scaleX(0.9010);transform-origin:0 0;">Ersetzen</div>
<div class="r" style="left:537px;top:557px;width:168px;height:37px;background:#333333;box-sizing:border-box;border:1px solid #8c8c8c;"></div>
<div class="t" style="left:572px;top:575.75px;font-size:18px;color:#fff;transform:scaleX(0.9514);transform-origin:0 0;">Alle ersetzen</div>
<div class="r" style="left:271px;top:645px;width:18px;height:18px;background:#ffffff;"></div>
<div class="t" style="left:294.9px;top:654.75px;font-size:18px;color:#fff;transform:scaleX(0.9459);transform-origin:0 0;">Rückwärts ersetzen</div>
<div class="r" style="left:271px;top:675px;width:18px;height:18px;background:#ffffff;"></div>
<div class="t" style="left:294.5px;top:684.75px;font-size:18px;color:#fff;transform:scaleX(0.9688);transform-origin:0 0;">Zellvorlagen</div>
<div class="r" style="left:116px;top:733px;width:141px;height:37px;background:#333333;box-sizing:border-box;border:1px solid #444444;"></div>
<div class="t" style="left:127.4px;top:750.75px;font-size:18px;color:#8a8a8a;transform:scaleX(0.9584);transform-origin:0 0;">Ähnlichkeiten...</div>
<svg class="r" style="left:-5px;top:825px" width="19" height="19" viewBox="0 0 19 19"><circle cx="9.5" cy="9.5" r="8.5" fill="#fff"/></svg>
<div class="t" style="left:18.4px;top:834.75px;font-size:18px;color:#fff;transform:scaleX(0.9500);transform-origin:0 0;">Spalten</div>
<div class="t" style="left:270.5px;top:834.75px;font-size:18px;color:#fff;transform:scaleX(0.9287);transform-origin:0 0;">Suchen in:</div>
<div class="r" style="left:366px;top:819px;width:134px;height:31px;background:#1f1f1f;box-sizing:border-box;border:1px solid #a0a0a0;"></div>
<div class="r" style="left:474px;top:820px;width:25px;height:29px;background:#333333;box-sizing:border-box;border:1px solid #a0a0a0;"></div>
<svg class="r" style="left:480px;top:830px" width="12" height="8" viewBox="0 0 12 8"><path d="M1 1.5L6 6.5L11 1.5" fill="none" stroke="#c8c8c8" stroke-width="1.2"/></svg>
<div class="t" style="left:368.6px;top:834.75px;font-size:18px;color:#fff;transform:scaleX(0.9694);transform-origin:0 0;">Formeln</div>
<div class="r" style="left:614px;top:863px;width:97px;height:36px;background:#333333;box-sizing:border-box;border:1px solid #8c8c8c;"></div>
<div class="t" style="left:626px;top:882.75px;font-size:18px;color:#fff;transform:scaleX(0.9120);transform-origin:0 0;">Schließen</div>
<div class="r" style="left:868px;top:0px;width:518px;height:1018px;background:#202020;box-sizing:border-box;border:1px solid #2e2e2e;"></div>
<div class="r" style="left:869px;top:1px;width:516px;height:44px;background:#000000;"></div>
<div class="t" style="left:880px;top:23.75px;font-size:18px;color:#fff;transform:scaleX(0.9528);transform-origin:0 0;">Suchergebnisse</div>
<svg class="r" style="left:1352px;top:14px" width="18" height="18" viewBox="0 0 18 18"><path d="M1 1L16 16M16 1L1 16" stroke="#fff" stroke-width="1.4"/></svg>
<div class="r" style="left:877px;top:53px;width:500px;height:859px;background:#1f1f1f;box-sizing:border-box;border:1px solid #8a8fa0;"></div>
<div class="r" style="left:877px;top:53px;width:500px;height:30px;background:#1f1f1f;box-sizing:border-box;border:1.5px solid #f2f2f2;"></div>
<div class="r" style="left:976px;top:54px;width:1.5px;height:28px;background:#e0e0e0;"></div>
<div class="r" style="left:1076px;top:54px;width:1.5px;height:28px;background:#e0e0e0;"></div>
<div class="t" style="left:879.5px;top:68.75px;font-size:18px;color:#fff;transform:scaleX(0.9291);transform-origin:0 0;">Tabelle</div>
<div class="t" style="left:978.7px;top:68.75px;font-size:18px;color:#fff;transform:scaleX(0.9227);transform-origin:0 0;">Zelle</div>
<div class="t" style="left:1079px;top:68.75px;font-size:18px;color:#fff;transform:scaleX(0.9992);transform-origin:0 0;">Inhalt</div>
<div class="r" style="left:878px;top:83px;width:472px;height:802px;overflow:hidden">
<div class="t" style="left:2px;top:14.75px;font-size:18px;color:#fff;transform:scaleX(0.9290);transform-origin:0 0;">Sheet1</div>
<div class="t" style="left:100.7px;top:14.75px;font-size:18px;color:#fff;transform:scaleX(0.9578);transform-origin:0 0;">$I$971085</div>
<div class="t" style="left:201px;top:14.75px;font-size:18px;color:#fff;transform:scaleX(0.9303);transform-origin:0 0;">Tod</div>
<div class="t" style="left:2px;top:41.75px;font-size:18px;color:#fff;transform:scaleX(0.9290);transform-origin:0 0;">Sheet1</div>
<div class="t" style="left:100.7px;top:41.75px;font-size:18px;color:#fff;transform:scaleX(0.9578);transform-origin:0 0;">$I$971086</div>
<div class="t" style="left:201px;top:41.75px;font-size:18px;color:#fff;transform:scaleX(0.9784);transform-origin:0 0;">Ploetzlicher Tod</div>
<div class="t" style="left:2px;top:68.75px;font-size:18px;color:#fff;transform:scaleX(0.9290);transform-origin:0 0;">Sheet1</div>
<div class="t" style="left:100.7px;top:68.75px;font-size:18px;color:#fff;transform:scaleX(0.9578);transform-origin:0 0;">$I$971087</div>
<div class="t" style="left:201px;top:68.75px;font-size:18px;color:#fff;transform:scaleX(0.9303);transform-origin:0 0;">Tod</div>
<div class="t" style="left:2px;top:95.75px;font-size:18px;color:#fff;transform:scaleX(0.9290);transform-origin:0 0;">Sheet1</div>
<div class="t" style="left:100.7px;top:95.75px;font-size:18px;color:#fff;transform:scaleX(0.9578);transform-origin:0 0;">$I$971090</div>
<div class="t" style="left:201px;top:95.75px;font-size:18px;color:#fff;transform:scaleX(0.9303);transform-origin:0 0;">Tod</div>
<div class="t" style="left:2px;top:122.75px;font-size:18px;color:#fff;transform:scaleX(0.9290);transform-origin:0 0;">Sheet1</div>
<div class="t" style="left:100.7px;top:122.75px;font-size:18px;color:#fff;transform:scaleX(0.9578);transform-origin:0 0;">$I$971091</div>
<div class="t" style="left:201px;top:122.75px;font-size:18px;color:#fff;transform:scaleX(0.9303);transform-origin:0 0;">Tod</div>
<div class="t" style="left:2px;top:149.75px;font-size:18px;color:#fff;transform:scaleX(0.9290);transform-origin:0 0;">Sheet1</div>
<div class="t" style="left:100.7px;top:149.75px;font-size:18px;color:#fff;transform:scaleX(0.9578);transform-origin:0 0;">$I$971094</div>
<div class="t" style="left:201px;top:149.75px;font-size:18px;color:#fff;transform:scaleX(0.9303);transform-origin:0 0;">Tod</div>
<div class="t" style="left:2px;top:176.75px;font-size:18px;color:#fff;transform:scaleX(0.9290);transform-origin:0 0;">Sheet1</div>
<div class="t" style="left:100.7px;top:176.75px;font-size:18px;color:#fff;transform:scaleX(0.9578);transform-origin:0 0;">$I$971097</div>
<div class="t" style="left:201px;top:176.75px;font-size:18px;color:#fff;transform:scaleX(0.9303);transform-origin:0 0;">Tod</div>
<div class="t" style="left:2px;top:203.75px;font-size:18px;color:#fff;transform:scaleX(0.9290);transform-origin:0 0;">Sheet1</div>
<div class="t" style="left:100.7px;top:203.75px;font-size:18px;color:#fff;transform:scaleX(0.9731);transform-origin:0 0;">$I$971103</div>
<div class="t" style="left:201px;top:203.75px;font-size:18px;color:#fff;transform:scaleX(0.9303);transform-origin:0 0;">Tod</div>
<div class="t" style="left:2px;top:230.75px;font-size:18px;color:#fff;transform:scaleX(0.9290);transform-origin:0 0;">Sheet1</div>
<div class="t" style="left:100.7px;top:230.75px;font-size:18px;color:#fff;transform:scaleX(0.9731);transform-origin:0 0;">$I$971109</div>
<div class="t" style="left:201px;top:230.75px;font-size:18px;color:#fff;transform:scaleX(0.9303);transform-origin:0 0;">Tod</div>
<div class="t" style="left:2px;top:257.75px;font-size:18px;color:#fff;transform:scaleX(0.9290);transform-origin:0 0;">Sheet1</div>
<div class="t" style="left:100.7px;top:257.75px;font-size:18px;color:#fff;transform:scaleX(0.9889);transform-origin:0 0;">$I$971118</div>
<div class="t" style="left:201px;top:257.75px;font-size:18px;color:#fff;transform:scaleX(0.9303);transform-origin:0 0;">Tod</div>
<div class="t" style="left:2px;top:284.75px;font-size:18px;color:#fff;transform:scaleX(0.9290);transform-origin:0 0;">Sheet1</div>
<div class="t" style="left:100.7px;top:284.75px;font-size:18px;color:#fff;transform:scaleX(0.9731);transform-origin:0 0;">$I$971123</div>
<div class="t" style="left:201px;top:284.75px;font-size:18px;color:#fff;transform:scaleX(0.9303);transform-origin:0 0;">Tod</div>
<div class="t" style="left:2px;top:311.75px;font-size:18px;color:#fff;transform:scaleX(0.9290);transform-origin:0 0;">Sheet1</div>
<div class="t" style="left:100.7px;top:311.75px;font-size:18px;color:#fff;transform:scaleX(0.9731);transform-origin:0 0;">$I$971142</div>
<div class="t" style="left:201px;top:311.75px;font-size:18px;color:#fff;transform:scaleX(0.9303);transform-origin:0 0;">Tod</div>
<div class="t" style="left:2px;top:338.75px;font-size:18px;color:#fff;transform:scaleX(0.9290);transform-origin:0 0;">Sheet1</div>
<div class="t" style="left:100.7px;top:338.75px;font-size:18px;color:#fff;transform:scaleX(0.9731);transform-origin:0 0;">$I$971152</div>
<div class="t" style="left:201px;top:338.75px;font-size:18px;color:#fff;transform:scaleX(0.9303);transform-origin:0 0;">Tod</div>
<div class="t" style="left:2px;top:365.75px;font-size:18px;color:#fff;transform:scaleX(0.9290);transform-origin:0 0;">Sheet1</div>
<div class="t" style="left:100.7px;top:365.75px;font-size:18px;color:#fff;transform:scaleX(0.9731);transform-origin:0 0;">$I$971153</div>
<div class="t" style="left:201px;top:365.75px;font-size:18px;color:#fff;transform:scaleX(0.9303);transform-origin:0 0;">Tod</div>
<div class="t" style="left:2px;top:392.75px;font-size:18px;color:#fff;transform:scaleX(0.9290);transform-origin:0 0;">Sheet1</div>
<div class="t" style="left:100.7px;top:392.75px;font-size:18px;color:#fff;transform:scaleX(0.9731);transform-origin:0 0;">$I$971158</div>
<div class="t" style="left:201px;top:392.75px;font-size:18px;color:#fff;transform:scaleX(0.9303);transform-origin:0 0;">Tod</div>
<div class="t" style="left:2px;top:419.75px;font-size:18px;color:#fff;transform:scaleX(0.9290);transform-origin:0 0;">Sheet1</div>
<div class="t" style="left:100.7px;top:419.75px;font-size:18px;color:#fff;transform:scaleX(0.9731);transform-origin:0 0;">$I$971159</div>
<div class="t" style="left:201px;top:419.75px;font-size:18px;color:#fff;transform:scaleX(0.9303);transform-origin:0 0;">Tod</div>
<div class="t" style="left:2px;top:446.75px;font-size:18px;color:#fff;transform:scaleX(0.9290);transform-origin:0 0;">Sheet1</div>
<div class="t" style="left:100.7px;top:446.75px;font-size:18px;color:#fff;transform:scaleX(0.9731);transform-origin:0 0;">$I$971162</div>
<div class="t" style="left:201px;top:446.75px;font-size:18px;color:#fff;transform:scaleX(0.9303);transform-origin:0 0;">Tod</div>
<div class="t" style="left:2px;top:473.75px;font-size:18px;color:#fff;transform:scaleX(0.9290);transform-origin:0 0;">Sheet1</div>
<div class="t" style="left:100.7px;top:473.75px;font-size:18px;color:#fff;transform:scaleX(0.9731);transform-origin:0 0;">$I$971164</div>
<div class="t" style="left:201px;top:473.75px;font-size:18px;color:#fff;transform:scaleX(0.9303);transform-origin:0 0;">Tod</div>
<div class="t" style="left:2px;top:500.75px;font-size:18px;color:#fff;transform:scaleX(0.9290);transform-origin:0 0;">Sheet1</div>
<div class="t" style="left:100.7px;top:500.75px;font-size:18px;color:#fff;transform:scaleX(0.9731);transform-origin:0 0;">$I$971166</div>
<div class="t" style="left:201px;top:500.75px;font-size:18px;color:#fff;transform:scaleX(0.9303);transform-origin:0 0;">Tod</div>
<div class="t" style="left:2px;top:527.75px;font-size:18px;color:#fff;transform:scaleX(0.9290);transform-origin:0 0;">Sheet1</div>
<div class="t" style="left:100.7px;top:527.75px;font-size:18px;color:#fff;transform:scaleX(0.9731);transform-origin:0 0;">$I$971167</div>
<div class="t" style="left:201px;top:527.75px;font-size:18px;color:#fff;transform:scaleX(0.9303);transform-origin:0 0;">Tod</div>
<div class="t" style="left:2px;top:554.75px;font-size:18px;color:#fff;transform:scaleX(0.9290);transform-origin:0 0;">Sheet1</div>
<div class="t" style="left:100.7px;top:554.75px;font-size:18px;color:#fff;transform:scaleX(0.9731);transform-origin:0 0;">$I$971176</div>
<div class="t" style="left:201px;top:554.75px;font-size:18px;color:#fff;transform:scaleX(0.9303);transform-origin:0 0;">Tod</div>
<div class="t" style="left:2px;top:581.75px;font-size:18px;color:#fff;transform:scaleX(0.9290);transform-origin:0 0;">Sheet1</div>
<div class="t" style="left:100.7px;top:581.75px;font-size:18px;color:#fff;transform:scaleX(0.9731);transform-origin:0 0;">$I$971178</div>
<div class="t" style="left:201px;top:581.75px;font-size:18px;color:#fff;transform:scaleX(0.9303);transform-origin:0 0;">Tod</div>
<div class="t" style="left:2px;top:608.75px;font-size:18px;color:#fff;transform:scaleX(0.9290);transform-origin:0 0;">Sheet1</div>
<div class="t" style="left:100.7px;top:608.75px;font-size:18px;color:#fff;transform:scaleX(0.9731);transform-origin:0 0;">$I$971182</div>
<div class="t" style="left:201px;top:608.75px;font-size:18px;color:#fff;transform:scaleX(0.9303);transform-origin:0 0;">Tod</div>
<div class="t" style="left:2px;top:635.75px;font-size:18px;color:#fff;transform:scaleX(0.9290);transform-origin:0 0;">Sheet1</div>
<div class="t" style="left:100.7px;top:635.75px;font-size:18px;color:#fff;transform:scaleX(0.9731);transform-origin:0 0;">$I$971184</div>
<div class="t" style="left:201px;top:635.75px;font-size:18px;color:#fff;transform:scaleX(0.9303);transform-origin:0 0;">Tod</div>
<div class="t" style="left:2px;top:662.75px;font-size:18px;color:#fff;transform:scaleX(0.9290);transform-origin:0 0;">Sheet1</div>
<div class="t" style="left:100.7px;top:662.75px;font-size:18px;color:#fff;transform:scaleX(0.9731);transform-origin:0 0;">$I$971189</div>
<div class="t" style="left:201px;top:662.75px;font-size:18px;color:#fff;transform:scaleX(0.9303);transform-origin:0 0;">Tod</div>
<div class="t" style="left:2px;top:689.75px;font-size:18px;color:#fff;transform:scaleX(0.9290);transform-origin:0 0;">Sheet1</div>
<div class="t" style="left:100.7px;top:689.75px;font-size:18px;color:#fff;transform:scaleX(0.9731);transform-origin:0 0;">$I$971190</div>
<div class="t" style="left:201px;top:689.75px;font-size:18px;color:#fff;transform:scaleX(0.9303);transform-origin:0 0;">Tod</div>
<div class="t" style="left:2px;top:716.75px;font-size:18px;color:#fff;transform:scaleX(0.9290);transform-origin:0 0;">Sheet1</div>
<div class="t" style="left:100.7px;top:716.75px;font-size:18px;color:#fff;transform:scaleX(0.9578);transform-origin:0 0;">$I$971202</div>
<div class="t" style="left:201px;top:716.75px;font-size:18px;color:#fff;transform:scaleX(0.9303);transform-origin:0 0;">Tod</div>
<div class="t" style="left:2px;top:743.75px;font-size:18px;color:#fff;transform:scaleX(0.9290);transform-origin:0 0;">Sheet1</div>
<div class="t" style="left:100.7px;top:743.75px;font-size:18px;color:#fff;transform:scaleX(0.9578);transform-origin:0 0;">$I$971203</div>
<div class="t" style="left:201px;top:743.75px;font-size:18px;color:#fff;transform:scaleX(0.9303);transform-origin:0 0;">Tod</div>
<div class="t" style="left:2px;top:770.75px;font-size:18px;color:#fff;transform:scaleX(0.9290);transform-origin:0 0;">Sheet1</div>
<div class="t" style="left:100.7px;top:770.75px;font-size:18px;color:#fff;transform:scaleX(0.9578);transform-origin:0 0;">$I$971213</div>
<div class="t" style="left:201px;top:770.75px;font-size:18px;color:#fff;transform:scaleX(0.9303);transform-origin:0 0;">Tod</div>
<div class="t" style="left:2px;top:797.75px;font-size:18px;color:#fff;transform:scaleX(0.9290);transform-origin:0 0;">Sheet1</div>
<div class="t" style="left:100.7px;top:797.75px;font-size:18px;color:#fff;transform:scaleX(0.9578);transform-origin:0 0;">$I$971215</div>
<div class="t" style="left:201px;top:797.75px;font-size:18px;color:#fff;transform:scaleX(0.9303);transform-origin:0 0;">Tod</div>
</div>
<div class="r" style="left:1350px;top:83px;width:26px;height:802px;background:#181818;"></div>
<svg class="r" style="left:1357px;top:93px" width="13" height="10" viewBox="0 0 13 10"><path d="M1 8L6.5 2.5L12 8" fill="none" stroke="#6b6b6b" stroke-width="2"/></svg>
<div class="r" style="left:1351px;top:799px;width:24px;height:20px;background:#4d4d4d;"></div>
<svg class="r" style="left:1357px;top:868px" width="13" height="10" viewBox="0 0 13 10"><path d="M1 2L6.5 7.5L12 2" fill="none" stroke="#6b6b6b" stroke-width="2"/></svg>
<div class="r" style="left:878px;top:885px;width:472px;height:26px;background:#181818;"></div>
<div class="r" style="left:903px;top:885px;width:337px;height:26px;background:#4d4d4d;"></div>
<svg class="r" style="left:884px;top:891px" width="12" height="14" viewBox="0 0 12 14"><path d="M9 1L3 7L9 13" fill="none" stroke="#6b6b6b" stroke-width="2"/></svg>
<svg class="r" style="left:1330px;top:891px" width="12" height="14" viewBox="0 0 12 14"><path d="M3 1L9 7L3 13" fill="none" stroke="#6b6b6b" stroke-width="2"/></svg>
<div class="r" style="left:1350px;top:885px;width:26px;height:26px;background:#202020;"></div>
<div class="t" style="left:878px;top:935.75px;font-size:18px;color:#fff;transform:scaleX(0.9793);transform-origin:0 0;">1335 Ergebnisse gefunden (nur 1000 werden angezeigt)</div>
<div class="r" style="left:883px;top:975px;width:18px;height:18px;background:#fff;"></div>
<svg class="r" style="left:885px;top:977px" width="14" height="14" viewBox="0 0 14 14"><path d="M2 7L5.5 11L12 3" fill="none" stroke="#222" stroke-width="1.6"/></svg>
<div class="t" style="left:906.6px;top:984.75px;font-size:18px;color:#fff;transform:scaleX(0.9678);transform-origin:0 0;">Diesen Dialog anzeigen</div>
<div class="r" style="left:1161px;top:966px;width:210px;height:37px;background:#333333;box-sizing:border-box;border:1px solid #ffffff;box-shadow:inset 0 0 0 1px #161616;"></div>
<div class="t" style="left:1229.6px;top:984.75px;font-size:18px;color:#fff;transform:scaleX(0.9120);transform-origin:0 0;">Schließen</div>
<div class="r" style="left:0px;top:1020px;width:1920px;height:60px;background:#242424;"></div>
<svg class="r" style="left:23px;top:1037px" width="26" height="26" viewBox="0 0 26 26"><path d="M0 3.5L11 2V12H0Z M12.5 1.8L25 0V12H12.5Z M0 13.5H11V23.5L0 22Z M12.5 13.5H25V25.5L12.5 23.7Z" fill="#fff"/></svg>
<div class="r" style="left:72px;top:1020px;width:431px;height:60px;background:#333333;box-sizing:border-box;border:2px solid #5c5c5c;"></div>
<svg class="r" style="left:90px;top:1038px" width="25" height="24" viewBox="0 0 25 24"><circle cx="15.5" cy="8.5" r="7" fill="none" stroke="#ddd" stroke-width="1.8"/><path d="M10.5 13.5L1 23" stroke="#ddd" stroke-width="1.8"/></svg>
<div class="t" style="left:132.8px;top:1052.37px;font-size:22px;color:#cfcfcf;transform:scaleX(0.9716);transform-origin:0 0;">Suchen</div>
<svg class="r" style="left:527px;top:1038px" width="25" height="23" viewBox="0 0 25 23"><rect x="1" y="5" width="16" height="13" fill="none" stroke="#fff" stroke-width="1.6"/><path d="M1 1H17M1 22H17" stroke="#fff" stroke-width="1.6"/><path d="M23 0V23" stroke="#fff" stroke-width="1.6"/><rect x="20" y="8" width="6" height="4" fill="#fff"/></svg>
<div class="r" style="left:581px;top:1020px;width:73px;height:60px;background:#a35a25;"></div>
<div class="r" style="left:581px;top:1077px;width:73px;height:3px;background:#f07a12;"></div>
<svg class="r" style="left:600px;top:1032px" width="38" height="38" viewBox="0 0 38 38"><circle cx="17.5" cy="17.5" r="17.5" fill="#5865f2"/><path d="M9 12Q12 9 15 9L16 10.5Q17.5 10 19 10.5L20 9Q23 9 26 12Q28 17 27.5 23Q25 25 22.5 25.5L21 23.5Q18 24.5 14 23.5L12.5 25.5Q10 25 7.5 23Q7 17 9 12Z" fill="#fff"/><circle cx="13.5" cy="18" r="2" fill="#5865f2"/><circle cx="21.5" cy="18" r="2" fill="#5865f2"/><circle cx="26.5" cy="26.5" r="10.5" fill="#e23b3b"/><circle cx="26.5" cy="26.5" r="4.5" fill="#fff"/></svg>
<svg class="r" style="left:676px;top:1037px" width="33" height="28" viewBox="0 0 33 28"><path d="M0 2Q0 0 2 0H11L14 3H31Q33 3 33 5V26Q33 28 31 28H2Q0 28 0 26Z" fill="#f5c242"/><rect x="0" y="6" width="33" height="22" rx="1" fill="#ffd866"/><path d="M9 27V17H24V27H20V21H13V27Z" fill="#1f8ad6"/></svg>
<svg class="r" style="left:749px;top:1032px" width="40" height="40" viewBox="0 0 40 40"><circle cx="18" cy="18" r="17" fill="#db4437"/><path d="M18 18L32.7 26.5A17 17 0 0 1 9.5 32.7Z" fill="#f4b400"/><path d="M18 18L9.5 32.7A17 17 0 0 1 3.3 9.5Z" fill="#0f9d58"/><path d="M18 18L3.3 9.5A17 17 0 0 1 35 18Z" fill="#db4437"/><path d="M18 18L35 18A17 17 0 0 1 26.5 32.7Z" fill="#f4b400"/><circle cx="18" cy="18" r="8" fill="#fff"/><circle cx="18" cy="18" r="6.2" fill="#4285f4"/><circle cx="27" cy="28" r="10" fill="#5f5fbf"/><text x="23.5" y="33" font-family="Liberation Sans" font-weight="bold" font-size="12" fill="#b8b8f0">$</text></svg>
<div class="r" style="left:737px;top:1077px;width:61px;height:3px;background:#76b9ed;"></div>
<svg class="r" style="left:825px;top:1033px" width="34" height="34" viewBox="0 0 34 34"><defs><linearGradient id="st" x1="0" y1="0" x2="0" y2="1"><stop offset="0" stop-color="#111d36"/><stop offset="1" stop-color="#1565a8"/></linearGradient></defs><circle cx="17" cy="17" r="17" fill="url(#st)"/><circle cx="22.5" cy="13" r="5.5" fill="none" stroke="#fff" stroke-width="2.4"/><path d="M0 19L11 24" stroke="#fff" stroke-width="4"/><circle cx="11.5" cy="24" r="4" fill="#fff"/><circle cx="11.5" cy="24" r="2" fill="#1d4f86"/><path d="M14 21L19 16" stroke="#fff" stroke-width="3"/></svg>
<svg class="r" style="left:899px;top:1035px" width="38" height="31" viewBox="0 0 38 31"><path d="M12 6L30 0L37 5V27Q37 30 34 30H15Z" fill="#1490df"/><path d="M14 11H37V28Q37 30 35 30H16Q14 30 14 28Z" fill="#28a8ea"/><path d="M14 11L37 11L26 21Z" fill="#50d9ff" opacity="0.6"/><rect x="0" y="6" width="17" height="17" rx="2" fill="#0a64ad"/><circle cx="8.5" cy="14.5" r="4.5" fill="none" stroke="#fff" stroke-width="2.2"/></svg>
<svg class="r" style="left:974px;top:1032px" width="36" height="35" viewBox="0 0 36 35"><rect x="0" y="0" width="36" height="35" fill="#bf0000"/><path d="M0 0H36V35H0Z" fill="none" stroke="#8b0000" stroke-width="2" stroke-dasharray="2 2"/><text x="4" y="29" font-family="Liberation Sans" font-weight="bold" font-style="italic" font-size="28" fill="#fff">Fz</text></svg>
<div class="r" style="left:1037px;top:1077px;width:61px;height:3px;background:#76b9ed;"></div>
<svg class="r" style="left:1049px;top:1032px" width="36" height="36" viewBox="0 0 36 36"><circle cx="18" cy="18" r="17.5" fill="#1ed760"/><path d="M7 13Q18 9 29 14M8.5 19Q18 16 27 20M10 24.5Q18 22 25 25.5" fill="none" stroke="#111" stroke-width="3" stroke-linecap="round"/></svg>
<div class="r" style="left:1112px;top:1077px;width:61px;height:3px;background:#76b9ed;"></div>
<svg class="r" style="left:1124px;top:1032px" width="36" height="36" viewBox="0 0 36 36"><path d="M2 22Q0 8 16 6Q30 6 30 14Q30 20 24 20Q20 20 20 25Q20 31 12 31Q4 31 2 22Z" fill="#bcd9f0" stroke="#8aa9c2"/><circle cx="7" cy="19" r="2.6" fill="#e33"/><circle cx="11" cy="12" r="2.6" fill="#3c3"/><circle cx="18" cy="10" r="2.6" fill="#f90"/><circle cx="14" cy="22" r="2" fill="#555"/><path d="M17 34L31 7" stroke="#e8962a" stroke-width="2.6"/><path d="M29 9L34 1L36 6Z" fill="#f2d9a0"/></svg>
<div class="r" style="left:1187px;top:1077px;width:61px;height:3px;background:#76b9ed;"></div>
<svg class="r" style="left:1200px;top:1033px" width="35" height="35" viewBox="0 0 35 35"><path d="M1 3H22L28 8V34H1Z" fill="#9ad14f" stroke="#ddd" stroke-width="1.2"/><path d="M1 3H22V8H1Z" fill="#eee"/><circle cx="14" cy="18" r="6" fill="#2e7d1f"/><circle cx="19" cy="10" r="3" fill="#fff" stroke="#333"/><path d="M22 33L34 5" stroke="#e0a030" stroke-width="2.5"/></svg>
<div class="r" style="left:1262px;top:1077px;width:61px;height:3px;background:#76b9ed;"></div>
<svg class="r" style="left:1278px;top:1036px" width="28" height="28" viewBox="0 0 28 28"><polygon points="27.50,14.00 27.38,15.76 27.04,17.49 23.70,18.02 23.09,19.25 22.33,20.39 23.55,23.55 22.22,24.71 20.75,25.69 18.02,23.70 16.72,24.14 15.37,24.41 14.00,27.50 12.24,27.38 10.51,27.04 9.98,23.70 8.75,23.09 7.61,22.33 4.45,23.55 3.29,22.22 2.31,20.75 4.30,18.02 3.86,16.72 3.59,15.37 0.50,14.00 0.62,12.24 0.96,10.51 4.30,9.98 4.91,8.75 5.67,7.61 4.45,4.45 5.78,3.29 7.25,2.31 9.98,4.30 11.28,3.86 12.63,3.59 14.00,0.50 15.76,0.62 17.49,0.96 18.02,4.30 19.25,4.91 20.39,5.67 23.55,4.45 24.71,5.78 25.69,7.25 23.70,9.98 24.14,11.28 24.41,12.63" fill="#fff"/><circle cx="14" cy="14" r="5" fill="#1d1d1d"/></svg>
<div class="r" style="left:1331px;top:1020px;width:73px;height:60px;background:#575757;"></div>
<div class="r" style="left:1331px;top:1077px;width:73px;height:3px;background:#76b9ed;"></div>
<svg class="r" style="left:1352px;top:1032px" width="30" height="37" viewBox="0 0 30 37"><path d="M3 0H21L30 9V34Q30 37 27 37H3Q0 37 0 34V3Q0 0 3 0Z" fill="#1aaa3a"/><path d="M21 0L30 9H21Z" fill="#98e27e"/><g fill="none" stroke="#dff5df" stroke-width="1.2"><rect x="5" y="14" width="14" height="9"/><path d="M5 18.5H19M10 14V23M14.5 14V23"/></g><rect x="14" y="20" width="10" height="9" fill="#7ad37a"/></svg>
<svg class="r" style="left:1651px;top:1043px" width="19" height="11" viewBox="0 0 19 11"><path d="M1 10L9.5 1.5L18 10" fill="none" stroke="#fff" stroke-width="1.5"/></svg>
<svg class="r" style="left:1696px;top:1041px" width="25" height="18" viewBox="0 0 25 18"><path d="M4 17Q0 17 0 13Q0 9 4 9Q5 3 11 3Q16 3 18 8Q24 8 24 13Q24 17 20 17Z" fill="#e6e6e6"/><path d="M4 9Q5 3 11 3Q16 3 18 8" fill="#bdbdbd"/></svg>
<div class="t" style="left:1764.5px;top:1037.75px;font-size:18px;color:#fff;transform:scaleX(0.9546);transform-origin:0 0;">23:06</div>
<div class="t" style="left:1743.0px;top:1064.75px;font-size:18px;color:#fff;transform:scaleX(0.9546);transform-origin:0 0;">19.12.2024</div>
<svg class="r" style="left:1857px;top:1037px" width="40" height="40" viewBox="0 0 40 40"><path d="M1 1H25V19H16L10 25V19H1Z" fill="#fff"/><path d="M5 6H21M5 10H21M5 14H17" stroke="#333" stroke-width="1.4"/><circle cx="25" cy="25" r="11.5" fill="#333" stroke="#777" stroke-width="1.2"/><text x="20.5" y="31" font-family="Liberation Sans" font-weight="bold" font-size="16" fill="#fff">5</text></svg>
<div class="r" style="left:1913px;top:1020px;width:2px;height:60px;background:#5a5a5a;"></div>
</body></html>
